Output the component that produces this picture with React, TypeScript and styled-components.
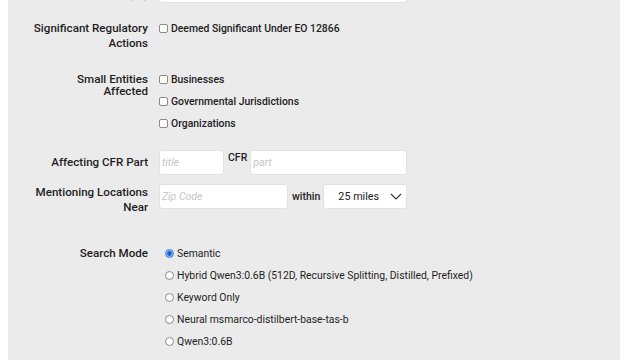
import React from "react";
import styled, { createGlobalStyle } from "styled-components";

const Global = createGlobalStyle`
  html, body { margin: 0; padding: 0; background: #ffffff; }
  body { font-family: Roboto, "Liberation Sans", Arial, sans-serif; color: #222; }
  * { box-sizing: border-box; }
`;

const Page = styled.div`
  width: 640px;
  height: 360px;
  overflow: hidden;
  background: #ffffff;
`;

const Panel = styled.div`
  margin: -22px 20px 0 8px;
  background: #ebebeb;
  padding: 0 0 40px 0;
  display: flex;
  flex-direction: column;
`;

const Row = styled.div<{ $mt: number }>`
  display: grid;
  grid-template-columns: 140px 248px;
  column-gap: 11px;
  margin-top: ${(p) => p.$mt}px;
  align-items: start;
`;

const Label = styled.div<{ $lh?: number; $pt?: number }>`
  text-align: right;
  font-size: 11.6px;
  font-weight: 500;
  line-height: ${(p) => p.$lh ?? 14.5}px;
  padding-top: ${(p) => p.$pt ?? 0}px;
  padding-left: 22px;
  color: #1e1e1e;
`;

const Field = styled.div`
  display: flex;
  flex-direction: column;
`;

const Inline = styled.div`
  display: flex;
  align-items: center;
`;

const TextInput = styled.input<{ $w: number }>`
  width: ${(p) => p.$w}px;
  height: 25px;
  border: 1px solid #e2e2e2;
  border-radius: 3px;
  background: #fff;
  padding: 0 2px;
  font-family: Roboto, "Liberation Sans", Arial, sans-serif;
  font-size: 10.5px;
  outline: none;
  &::placeholder {
    color: #c6c6c6;
    font-style: italic;
  }
`;

const Joiner = styled.span<{ $ml: number; $mr: number; $raise: number }>`
  font-size: 10.5px;
  font-weight: 500;
  margin: 0 ${(p) => p.$mr}px 0 ${(p) => p.$ml}px;
  color: #222;
  position: relative;
  top: -${(p) => p.$raise}px;
`;

const SelectBox = styled.div`
  width: 85px;
  height: 25px;
  border: 1px solid #e2e2e2;
  border-radius: 3px;
  background: #fff;
  display: flex;
  align-items: center;
  justify-content: space-between;
  padding: 0 4px 0 14px;
  font-size: 10.8px;
  color: #222;
`;

const CheckItem = styled.label<{ $shift?: number }>`
  display: flex;
  align-items: center;
  height: 22px;
  margin-top: ${(p) => p.$shift ?? 0}px;
  font-size: 10.4px;
  font-weight: 500;
  color: #222;
  gap: 3px;
  white-space: nowrap;
`;

const Box = styled.span`
  width: 9px;
  height: 9px;
  border: 1px solid #8a8a8a;
  border-radius: 2px;
  background: #fff;
  flex: none;
`;

const RadioItem = styled.label`
  display: flex;
  align-items: center;
  height: 22px;
  font-size: 10.4px;
  color: #1e1e1e;
  gap: 3px;
  padding-left: 6px;
  white-space: nowrap;
`;

const Dot = styled.span<{ $on?: boolean }>`
  width: 9px;
  height: 9px;
  border-radius: 50%;
  flex: none;
  border: 1px solid ${(p) => (p.$on ? "#3f7fe0" : "#8a8a8a")};
  background: ${(p) =>
    p.$on
      ? "radial-gradient(circle, #1f5fcf 0 2px, #8fb6f2 2.5px 100%)"
      : "#fff"};
`;

const Chevron = () => (
  <svg width="12" height="7" viewBox="0 0 12 7" fill="none">
    <path d="M1 1l5 5 5-5" stroke="#333" strokeWidth="1.1" />
  </svg>
);

const modes = [
  "Semantic",
  "Hybrid Qwen3:0.6B (512D, Recursive Splitting, Distilled, Prefixed)",
  "Keyword Only",
  "Neural msmarco-distilbert-base-tas-b",
  "Qwen3:0.6B",
];

export default function App() {
  return (
    <Page>
      <Global />
      <Panel>
        <Row $mt={0}>
          <Label $pt={9}>Docket (ID)</Label>
          <TextInput $w={248} />
        </Row>
        <Row $mt={18}>
          <Label>Significant Regulatory Actions</Label>
          <Field>
            <CheckItem $shift={-4}>
              <Box />
              Deemed Significant Under EO 12866
            </CheckItem>
          </Field>
        </Row>
        <Row $mt={23}>
          <Label $lh={12}>Small Entities Affected</Label>
          <Field>
            <CheckItem $shift={-5}>
              <Box />
              Businesses
            </CheckItem>
            <CheckItem>
              <Box />
              Governmental Jurisdictions
            </CheckItem>
            <CheckItem>
              <Box />
              Organizations
            </CheckItem>
          </Field>
        </Row>
        <Row $mt={16}>
          <Label $pt={5}>Affecting CFR Part</Label>
          <Inline>
            <TextInput $w={65} placeholder="title" />
            <Joiner $ml={4} $mr={3} $raise={5}>CFR</Joiner>
            <TextInput $w={159} placeholder="part" />
          </Inline>
        </Row>
        <Row $mt={9}>
          <Label $pt={1}>Mentioning Locations Near</Label>
          <Inline>
            <TextInput $w={129} placeholder="Zip Code" />
            <Joiner $ml={4} $mr={3} $raise={0}>within</Joiner>
            <SelectBox>
              25 miles
              <Chevron />
            </SelectBox>
          </Inline>
        </Row>
        <Row $mt={28}>
          <Label $pt={4}>Search Mode</Label>
          <Field>
            {modes.map((m, i) => (
              <RadioItem key={m}>
                <Dot $on={i === 0} />
                {m}
              </RadioItem>
            ))}
          </Field>
        </Row>
      </Panel>
    </Page>
  );
}
